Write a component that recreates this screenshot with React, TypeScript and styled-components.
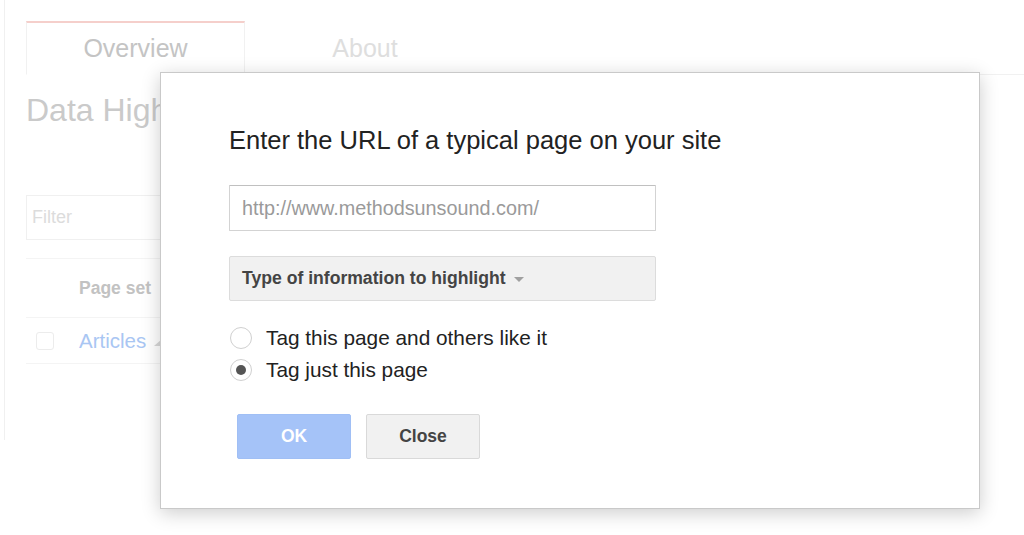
import React, { useState } from 'react';
import styled, { createGlobalStyle } from 'styled-components';

const GlobalStyle = createGlobalStyle`
  html, body {
    margin: 0;
    padding: 0;
    background: #ffffff;
    font-family: 'Liberation Sans', Arial, sans-serif;
  }
`;

const Screen = styled.div`
  position: relative;
  width: 1024px;
  height: 535px;
  overflow: hidden;
  background: #ffffff;
`;

// faded page behind the dialog
const Page = styled.div`
  margin-left: 4px;
  height: 440px;
  border-left: 1px solid #f0f0f0;
  padding: 21px 0 0 21px;
  box-sizing: border-box;
`;

const TabBar = styled.div`
  display: flex;
  height: 54px;
`;

const Tab = styled.div<{ $active?: boolean }>`
  width: ${(p) => (p.$active ? '219px' : '240px')};
  display: flex;
  align-items: center;
  justify-content: center;
  font-size: 25px;
  box-sizing: border-box;
  color: ${(p) => (p.$active ? '#c4c4c4' : '#dedede')};
  border-top: 2px solid ${(p) => (p.$active ? '#f5cfcb' : 'transparent')};
  border-left: 1px solid ${(p) => (p.$active ? '#f1f1f1' : 'transparent')};
  border-right: 1px solid ${(p) => (p.$active ? '#f1f1f1' : 'transparent')};
  border-bottom: 1px solid ${(p) => (p.$active ? 'transparent' : '#f1f1f1')};
`;

const TabFill = styled.div`
  flex: 1;
  border-bottom: 1px solid #f1f1f1;
`;

const Heading = styled.h1`
  margin: 17px 0 0;
  font-size: 32px;
  font-weight: normal;
  line-height: 36px;
  color: #cacaca;
`;

const FilterBox = styled.div`
  margin-top: 67px;
  width: 300px;
  height: 45px;
  border: 1px solid #f0f0f0;
  box-sizing: border-box;
  display: flex;
  align-items: center;
  padding-left: 5px;
  font-size: 18px;
  color: #dcdcdc;
`;

const Table = styled.div`
  margin-top: 18px;
  width: 400px;
  border-top: 1px solid #f4f4f4;
`;

const Row = styled.div<{ $h: number }>`
  display: flex;
  align-items: center;
  height: ${(p) => p.$h}px;
  border-bottom: 1px solid #f4f4f4;
  box-sizing: border-box;
`;

const CheckCell = styled.div`
  width: 53px;
  display: flex;
  padding-left: 10px;
  box-sizing: border-box;
`;

const Check = styled.div`
  width: 18px;
  height: 18px;
  border: 1px solid #ececec;
  border-radius: 3px;
  box-sizing: border-box;
`;

const HeadCell = styled.div`
  font-size: 17.5px;
  font-weight: bold;
  color: #c2c2c2;
`;

const LinkCell = styled.div`
  font-size: 20.5px;
  color: #a9c6f3;
  display: flex;
  align-items: center;
  gap: 8px;
`;

const Tri = styled.span`
  width: 0;
  height: 0;
  border-left: 8px solid transparent;
  border-bottom: 7px solid #d8d8d8;
  margin-top: 4px;
`;

// dialog
const Dialog = styled.div`
  position: absolute;
  left: 160px;
  top: 72px;
  width: 820px;
  height: 437px;
  box-sizing: border-box;
  background: #ffffff;
  border: 1px solid #c9c9c9;
  box-shadow: 0 4px 18px rgba(0, 0, 0, 0.2);
  padding: 52px 0 0 68px;
  display: flex;
  flex-direction: column;
  align-items: flex-start;
`;

const Title = styled.div`
  font-size: 25.5px;
  line-height: 30px;
  color: #222222;
`;

const UrlInput = styled.input`
  margin-top: 30px;
  width: 427px;
  height: 46px;
  box-sizing: border-box;
  border: 1px solid #d3d3d3;
  border-top-color: #c0c0c0;
  border-radius: 1px;
  padding: 0 12px;
  font-family: 'Liberation Sans', Arial, sans-serif;
  font-size: 19.8px;
  color: #333;
  outline: none;
  &::placeholder {
    color: #9a9a9a;
  }
`;

const Dropdown = styled.button`
  margin-top: 25px;
  width: 427px;
  height: 45px;
  box-sizing: border-box;
  background: #f1f1f1;
  border: 1px solid #dcdcdc;
  border-radius: 2px;
  padding: 0 12px;
  display: flex;
  align-items: center;
  gap: 8px;
  font-family: 'Liberation Sans', Arial, sans-serif;
  font-size: 17.6px;
  font-weight: bold;
  color: #444444;
  cursor: pointer;
`;

const Caret = styled.span`
  width: 0;
  height: 0;
  border-left: 5px solid transparent;
  border-right: 5px solid transparent;
  border-top: 5px solid #a0a0a0;
  margin-top: 1px;
`;

const Options = styled.div`
  margin-top: 21px;
  display: flex;
  flex-direction: column;
`;

const Option = styled.label`
  display: flex;
  align-items: center;
  height: 32px;
  gap: 14px;
  font-size: 20.8px;
  color: #222222;
  cursor: pointer;
  padding-left: 1px;
`;

const Radio = styled.span<{ $on: boolean }>`
  width: 22px;
  height: 22px;
  border-radius: 50%;
  border: 1px solid #d0d0d0;
  box-sizing: border-box;
  display: flex;
  align-items: center;
  justify-content: center;
  background: #fff;
  &::after {
    content: '';
    display: ${(p) => (p.$on ? 'block' : 'none')};
    width: 10px;
    height: 10px;
    border-radius: 50%;
    background: #555555;
  }
`;

const Actions = styled.div`
  margin-top: 28px;
  margin-left: 8px;
  display: flex;
  gap: 15px;
`;

const Btn = styled.button<{ $primary?: boolean }>`
  width: 114px;
  height: 45px;
  box-sizing: border-box;
  border-radius: 2px;
  border: 1px solid ${(p) => (p.$primary ? '#a0bff5' : '#d9d9d9')};
  background: ${(p) => (p.$primary ? '#a5c3f8' : '#f1f1f1')};
  color: ${(p) => (p.$primary ? '#ffffff' : '#444444')};
  font-family: 'Liberation Sans', Arial, sans-serif;
  font-size: 17.5px;
  font-weight: bold;
  cursor: pointer;
`;

export default function App() {
  const [choice, setChoice] = useState<'others' | 'just'>('just');

  return (
    <Screen>
      <GlobalStyle />
      <Page>
        <TabBar>
          <Tab $active>Overview</Tab>
          <Tab>About</Tab>
          <TabFill />
        </TabBar>
        <Heading>Data Highlighter</Heading>
        <FilterBox>Filter</FilterBox>
        <Table>
          <Row $h={59}>
            <CheckCell />
            <HeadCell>Page set</HeadCell>
          </Row>
          <Row $h={46}>
            <CheckCell>
              <Check />
            </CheckCell>
            <LinkCell>
              Articles <Tri />
            </LinkCell>
          </Row>
        </Table>
      </Page>

      <Dialog>
        <Title>Enter the URL of a typical page on your site</Title>
        <UrlInput placeholder="http://www.methodsunsound.com/" />
        <Dropdown type="button">
          Type of information to highlight <Caret />
        </Dropdown>
        <Options>
          <Option onClick={() => setChoice('others')}>
            <Radio $on={choice === 'others'} />
            Tag this page and others like it
          </Option>
          <Option onClick={() => setChoice('just')}>
            <Radio $on={choice === 'just'} />
            Tag just this page
          </Option>
        </Options>
        <Actions>
          <Btn $primary type="button">
            OK
          </Btn>
          <Btn type="button">Close</Btn>
        </Actions>
      </Dialog>
    </Screen>
  );
}
